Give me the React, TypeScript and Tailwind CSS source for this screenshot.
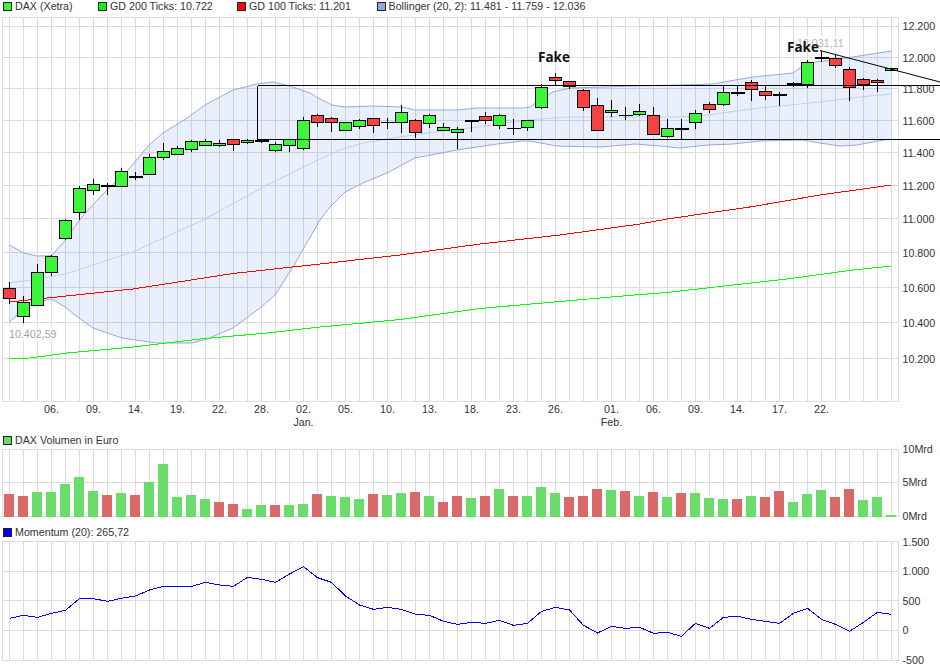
import React from 'react';

type Candle = [number, number, number, number, 'g' | 'r' | 'd' | 't'];

const GRID = '#dcdcdc';
const RIGHT = 898.5;
const xAt = (k: number) => 9.5 + 14 * k;
const xs = Array.from({ length: 64 }, (_, k) => xAt(k));
const pts = (list: number[][]) => list.map((p) => p.join(',')).join(' ');

// wick top, body top, body bottom, wick bottom, kind
const candles: Candle[] = [
  [282, 288.5, 298.5, 304, 'r'], [296, 302.5, 316.5, 323, 'g'], [264, 272.5, 305.5, 306, 'g'], [255, 256.5, 272.5, 276, 'g'],
  [219, 220.5, 238.5, 240, 'g'], [186, 188.5, 212.5, 220, 'g'], [179, 184.5, 190.5, 195, 'g'], [183, 186, 186, 195, 'd'],
  [168, 171.5, 186.5, 187, 'g'], [172, 177, 177, 180, 'd'], [154, 157.5, 174.5, 174, 'g'], [143, 151.5, 157.5, 160, 'g'],
  [146, 148.5, 154.5, 155, 'g'], [140, 141.5, 149.5, 152, 'g'], [139, 141.5, 145.5, 146, 'g'], [140, 143.5, 145.5, 147, 'g'],
  [139, 139.5, 144.5, 151, 'r'], [139, 140.5, 142.5, 144, 'g'], [139, 141, 141, 143, 'd'], [142, 144.5, 150.5, 152, 'g'],
  [139, 139.5, 145.5, 152, 'g'], [117, 120.5, 148.5, 150, 'g'], [114, 115.5, 122.5, 127, 'r'], [117, 118.5, 122.5, 132, 'r'],
  [122, 122.5, 130.5, 131, 'g'], [119, 120.5, 126.5, 129, 'g'], [118, 118.5, 125.5, 133, 'r'], [118, 122.5, 122.5, 129, 't'],
  [105, 112.5, 122.5, 133, 'g'], [119, 120.5, 132.5, 138, 'r'], [114, 115.5, 123.5, 128, 'g'], [123, 127.5, 130.5, 131, 'g'],
  [127, 129.5, 132.5, 149, 'g'], [120, 121, 121, 132, 'd'], [112, 116.5, 120.5, 124, 'r'], [114, 115.5, 125.5, 129, 'g'],
  [119, 128.5, 128.5, 135, 't'], [120, 120.5, 127.5, 131, 'g'], [84, 87.5, 107.5, 109, 'g'], [73, 77.5, 80.5, 85, 'r'],
  [81, 81.5, 86.5, 89, 'r'], [89, 90.5, 107.5, 111, 'r'], [98, 105.5, 130.5, 131, 'r'], [100, 110.5, 112.5, 117, 'g'],
  [107, 115.5, 115.5, 120, 't'], [104, 111.5, 114.5, 116, 'g'], [107, 115.5, 134.5, 135, 'r'], [119, 128.5, 136.5, 138, 'g'],
  [119, 128.5, 128.5, 139, 'd'], [110, 113.5, 122.5, 129, 'g'], [102, 104.5, 109.5, 113, 'r'], [86, 92.5, 104.5, 106, 'g'],
  [86, 93, 93, 96, 'd'], [80, 82.5, 89.5, 101, 'r'], [86, 91.5, 95.5, 100, 'r'], [92, 95, 95, 106, 'd'],
  [82, 84, 84, 87, 'd'], [60, 62.5, 84.5, 88, 'g'], [51, 57.5, 57.5, 62, 'd'], [54, 58.5, 65.5, 68, 'r'],
  [67, 69.5, 87.5, 101, 'r'], [78, 79.5, 84.5, 90, 'r'], [79, 80.5, 82.5, 92, 'r'], [68, 68.5, 70.5, 71, 'g'],
];

const upper = [[9.5, 245], [23.5, 253], [37.5, 256], [51.5, 255.7], [65.5, 240], [79.5, 220], [86, 212], [107, 190], [128, 170], [149, 145], [163, 133], [187, 118], [205, 105], [220, 97], [233, 90], [257, 84], [273, 82], [290, 86], [310, 93], [320, 99], [332, 105], [345, 107], [373, 106], [402, 107], [415, 110], [457, 110], [477, 108], [523, 108], [530, 107], [542, 98], [553, 92], [570, 88], [603, 87], [632, 86], [680, 85], [713, 84], [735, 80], [753, 77], [793, 73], [807, 63], [833, 60], [891.5, 51]];
const lower = [[9.5, 322], [23.5, 309], [37.5, 302], [51.5, 299], [65, 307], [79, 318], [93, 328], [122, 338], [157, 343], [192, 343], [207, 339], [233, 328], [260, 308], [275, 295], [293, 267], [320, 220], [330, 207], [345, 192], [363, 183], [387, 173], [415, 158], [457, 150], [497, 144], [523, 141], [530, 141], [557, 146], [600, 147], [635, 144], [660, 146], [680, 148], [707, 145], [733, 144], [760, 141], [803, 140], [820, 143], [840, 146], [857, 145], [883, 140], [891.5, 139.5]];
const middle = [[9.5, 283], [37, 279], [65, 274], [133, 252], [203, 220], [267, 185], [320, 159], [340, 150], [363, 143], [387, 139], [427, 133], [477, 127], [527, 120], [567, 117], [680, 117], [707, 115], [760, 108], [820, 102], [860, 97], [891.5, 94]];
const redAvg = [[9.5, 302], [133, 289], [233, 273.5], [320, 264], [400, 255], [480, 244], [560, 235], [640, 224], [667, 219], [753, 206.5], [820, 195], [891.5, 185]];
const greenAvg = [[9.5, 358.5], [30, 358], [67, 353], [133, 347], [200, 339], [267, 333], [320, 327], [400, 319.5], [480, 308.5], [560, 301.5], [640, 294.5], [667, 292.5], [720, 286.5], [787, 279], [853, 270], [891.5, 266]];

// bar tops, read as crop pixels: y = 430 + v / 3
const volume: [number, 'g' | 'r'][] = [
  [192, 'r'], [198, 'r'], [186, 'g'], [186, 'g'], [162, 'g'], [141, 'g'], [183, 'g'], [195, 'r'], [189, 'g'], [195, 'r'], [156, 'g'], [102, 'g'],
  [201, 'g'], [195, 'g'], [207, 'g'], [216, 'r'], [222, 'r'], [237, 'g'], [225, 'g'], [225, 'r'], [225, 'g'], [222, 'g'], [192, 'r'], [198, 'g'],
  [201, 'g'], [207, 'g'], [192, 'r'], [195, 'g'], [189, 'g'], [186, 'r'], [198, 'g'], [216, 'r'], [198, 'r'], [204, 'g'], [198, 'r'], [177, 'g'],
  [198, 'r'], [198, 'g'], [171, 'g'], [189, 'g'], [201, 'r'], [198, 'r'], [177, 'r'], [180, 'g'], [183, 'r'], [198, 'g'], [186, 'r'], [201, 'g'],
  [189, 'r'], [189, 'g'], [204, 'g'], [207, 'g'], [207, 'r'], [198, 'g'], [201, 'r'], [183, 'r'], [216, 'g'], [192, 'g'], [180, 'g'], [201, 'r'],
  [177, 'r'], [210, 'g'], [201, 'g'], [255, 'g'],
];

const momentum = [565, 556, 562, 550, 541, 506, 506, 514, 505, 498, 480, 469, 469, 469, 457, 465, 469, 442, 448, 457, 432, 410, 443, 457, 498, 525, 538, 532, 538, 553, 556, 574, 583, 577, 580, 571, 586, 580, 544, 532, 540, 586, 609, 589, 595, 592, 610, 607, 619, 580, 595, 562, 559, 568, 574, 580, 550, 535, 568, 583, 604, 577, 547, 553];

const priceTicks: [string, number][] = [['12.200', 26], ['12.000', 57.5], ['11.800', 88.5], ['11.600', 120.5], ['11.400', 152.5], ['11.200', 185.5], ['11.000', 218.5], ['10.800', 252.5], ['10.600', 287.5], ['10.400', 322.5], ['10.200', 358.5]];
const dateTicks: [string, number][] = [['06.', 3], ['09.', 6], ['14.', 9], ['19.', 12], ['22.', 15], ['28.', 18], ['02.', 21], ['05.', 24], ['10.', 27], ['13.', 30], ['18.', 33], ['23.', 36], ['26.', 39], ['01.', 43], ['06.', 46], ['09.', 49], ['14.', 52], ['17.', 55], ['22.', 58]];

function Legend({ color, label, className }: { color: string; label: string; className?: string }) {
  return (
    <div className={`flex items-center gap-[3px] ${className ?? ''}`}>
      <span className="block h-[9px] w-[9px] border border-[#222]" style={{ backgroundColor: color }} />
      <span className="text-[10.7px] leading-none text-[#333] whitespace-nowrap">{label}</span>
    </div>
  );
}

function Grid({ top, bottom, rows }: { top: number; bottom: number; rows: number[] }) {
  return (
    <g stroke={GRID} strokeWidth="1" shapeRendering="crispEdges">
      {xs.map((x) => (
        <line key={x} x1={x} x2={x} y1={top} y2={bottom} />
      ))}
      {rows.map((y) => (
        <line key={y} x1={2.5} x2={RIGHT} y1={y} y2={y} />
      ))}
      <rect x={2.5} y={top} width={RIGHT - 2.5} height={bottom - top} fill="none" />
    </g>
  );
}

function Axis({ ticks }: { ticks: [string, number][] }) {
  return (
    <g fontSize="10.7" fill="#333">
      {ticks.map(([t, y]) => (
        <text key={t} x={902.5} y={y} dominantBaseline="central">{t}</text>
      ))}
    </g>
  );
}

function MainChart() {
  return (
    <svg className="block h-[414px] w-[940px] overflow-visible" viewBox="0 17 940 414">
      <Grid top={17.5} bottom={401.5} rows={priceTicks.map((t) => t[1])} />
      <polygon points={pts([...upper, ...[...lower].reverse()])} fill="#3366dd" fillOpacity="0.1" />
      <polyline points={pts(upper)} fill="none" stroke="#93a9dd" strokeWidth="1" />
      <polyline points={pts(lower)} fill="none" stroke="#93a9dd" strokeWidth="1" />
      <polyline points={pts(middle)} fill="none" stroke="#bdd1f6" strokeWidth="1" />
      <polyline points={pts(redAvg)} fill="none" stroke="#ff0000" strokeWidth="1" shapeRendering="crispEdges" />
      <polyline points={pts(greenAvg)} fill="none" stroke="#00ff00" strokeWidth="1" shapeRendering="crispEdges" />
      <g shapeRendering="crispEdges" stroke="#000" strokeWidth="1">
        {candles.map(([wt, bt, bb, wb, kind], k) => {
          const x = xAt(k);
          return (
            <g key={k}>
              <line x1={x} x2={x} y1={wt} y2={wb} />
              {kind === 'd' && <line x1={x - 6.5} x2={x + 7} y1={bt} y2={bt} strokeWidth="2" />}
              {kind === 't' && <line x1={x - 6.5} x2={x + 7} y1={bt} y2={bt} />}
              {(kind === 'g' || kind === 'r') && (
                <rect x={x - 6} y={bt} width={12} height={bb - bt} fill={kind === 'g' ? '#3cf63c' : '#f54242'} />
              )}
            </g>
          );
        })}
        <line x1={257.5} x2={257.5} y1={85.5} y2={139.5} />
        <line x1={257.5} x2={940} y1={85.5} y2={85.5} />
        <line x1={257.5} x2={940} y1={139.5} y2={139.5} />
      </g>
      <line x1={820} y1={50.5} x2={940} y2={82} stroke="#000" strokeWidth="1" />
      <rect x={5} y={326} width={54} height={15} fill="#fff" fillOpacity="0.8" />
      <text x={9} y={333.5} fontSize="10.7" fill="#a3a3a3" dominantBaseline="central">10.402,59</text>
      <rect x={795} y={36} width={52} height={14} fill="#fff" fillOpacity="0.8" />
      <text x={797} y={43} fontSize="10.7" fill="#b5b5b5" dominantBaseline="central">12.031,11</text>
      <text x={538} y={57} fontSize="13.5" fontWeight="700" fill="#111" fontFamily="'Open Sans', sans-serif" dominantBaseline="central">Fake</text>
      <text x={787} y={47} fontSize="13.5" fontWeight="700" fill="#111" fontFamily="'Open Sans', sans-serif" dominantBaseline="central">Fake</text>
      <Axis ticks={priceTicks} />
      <g fontSize="10.7" fill="#333" textAnchor="middle">
        {dateTicks.map(([t, k]) => (
          <text key={k} x={xAt(k)} y={409} dominantBaseline="central">{t}</text>
        ))}
        <text x={303.5} y={422} dominantBaseline="central">Jan.</text>
        <text x={611.5} y={422} dominantBaseline="central">Feb.</text>
      </g>
    </svg>
  );
}

function VolumeChart() {
  return (
    <svg className="block h-[75px] w-[940px] overflow-visible" viewBox="0 449 940 75">
      <Grid top={449.5} bottom={516.5} rows={[482.5]} />
      <g shapeRendering="crispEdges">
        {volume.map(([v, c], k) => {
          const y = Math.round(430 + v / 3);
          return <rect key={k} x={xAt(k) - 5.5} y={y} width={10} height={517 - y} fill={c === 'g' ? '#6adc6a' : '#da6a6a'} />;
        })}
      </g>
      <Axis ticks={[['10Mrd', 449], ['5Mrd', 482], ['0Mrd', 516]]} />
    </svg>
  );
}

function MomentumChart() {
  const line = momentum.map((v, k) => [xAt(k), 430 + v / 3]);
  return (
    <svg className="block h-[125px] w-[940px] overflow-visible" viewBox="0 541 940 125">
      <Grid top={541.5} bottom={660.5} rows={[571.5, 600.5, 630.5]} />
      <polyline points={pts(line)} fill="none" stroke="#0000ff" strokeWidth="1" shapeRendering="crispEdges" />
      <Axis ticks={[['1.500', 541.5], ['1.000', 571], ['500', 600.5], ['0', 630], ['-500', 660]]} />
    </svg>
  );
}

export default function App() {
  return (
    <div className="h-[670px] w-[940px] overflow-hidden bg-white font-['Liberation_Sans',sans-serif]">
      <div className="flex h-[17px] items-center pl-[3px] pb-[4px]">
        <Legend color="#3cf63c" label="DAX (Xetra)" className="w-[95px]" />
        <Legend color="#00ff00" label="GD 200 Ticks: 10.722" className="w-[139px]" />
        <Legend color="#ff0000" label="GD 100 Ticks: 11.201" className="w-[139.5px]" />
        <Legend color="#93a9dd" label="Bollinger (20, 2): 11.481 - 11.759 - 12.036" />
      </div>
      <MainChart />
      <div className="flex h-[18px] items-center pl-[3px] pt-[1px]">
        <Legend color="#6adc6a" label="DAX Volumen in Euro" />
      </div>
      <VolumeChart />
      <div className="flex h-[17px] items-center pl-[3px]">
        <Legend color="#0000ff" label="Momentum (20): 265,72" />
      </div>
      <MomentumChart />
    </div>
  );
}
